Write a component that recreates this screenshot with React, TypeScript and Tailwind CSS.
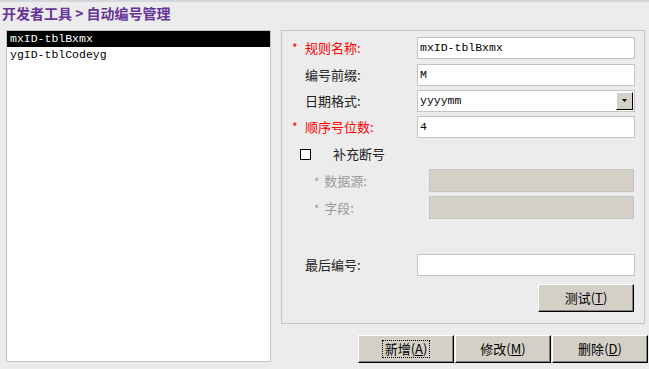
const mono = "font-['Liberation_Mono','Noto_Sans_CJK_SC',monospace]"
const cjk = "font-['Noto_Sans_CJK_SC','Liberation_Sans',sans-serif]"

const rules = ["mxID-tblBxmx", "ygID-tblCodeyg"]

function Btn({ label, hot, focus, className = "" }: { label: string; hot: string; focus?: boolean; className?: string }) {
	return (
		<button
			className={`flex items-center justify-center bg-[#d4d0c8] border border-t-white border-l-white border-b-black border-r-black shadow-[inset_-1px_-1px_0_#808080] text-[13px] text-black ${cjk} ${className}`}
		>
			<span className={`px-[2px] leading-[16px] ${focus ? "outline outline-1 outline-dotted outline-black" : ""}`}>
				{label}(<span className="underline">{hot}</span>)
			</span>
		</button>
	)
}

function Field({ value, disabled }: { value?: string; disabled?: boolean }) {
	return (
		<div
			className={`h-[22px] border border-[#c4c4c4] flex items-center px-[2px] text-[11.5px] text-black ${mono} ${disabled ? "bg-[#d4d0c8] w-[205px] h-[23px]" : "bg-white w-[218px]"}`}
		>
			{value}
		</div>
	)
}

function Label({ text, req, red }: { text: string; req?: boolean; red?: boolean }) {
	return (
		<div className={`w-[135px] flex items-center text-[13px] ${cjk} ${red ? "text-[#ff0000]" : "text-[#222]"}`}>
			<span className="w-[13px] pl-[10px] text-[12px]">{req ? "*" : ""}</span>
			<span className="ml-[10px]">{text}</span>
		</div>
	)
}

export default function App() {
	return (
		<div className="w-[649px] h-[369px] bg-[#ececec] border-t-2 border-[#d3d7dc] overflow-hidden">
			<div className={`h-[28px] pl-[2px] pt-[1px] text-[14px] font-bold text-[#663399] ${cjk}`}>开发者工具 &gt; 自动编号管理</div>
			<div className="flex pl-[6px] gap-[10px]">
				<ul className={`w-[265px] h-[332px] bg-white border border-[#c4c4c4] text-[11.5px] ${mono}`}>
					{rules.map((r, i) => (
						<li key={r} className={`h-[16px] leading-[16px] pl-[3px] ${i === 0 ? "bg-black text-white" : "text-black"}`}>
							{r}
						</li>
					))}
				</ul>
				<div className="flex flex-col">
					<div className="w-[364px] h-[294px] border border-[#c4c4c4] pt-[6px] flex flex-col">
						<div className="flex">
							<Label text="规则名称:" req red />
							<Field value="mxID-tblBxmx" />
						</div>
						<div className="flex mt-[5px]">
							<Label text="编号前缀:" />
							<Field value="M" />
						</div>
						<div className="flex mt-[4px]">
							<Label text="日期格式:" />
							<div className={`w-[218px] h-[22px] bg-white border border-[#c4c4c4] flex items-center justify-between pl-[2px] text-[11.5px] ${mono}`}>
								yyyymm
								<span className="w-[17px] h-[18px] mr-px bg-[#d4d0c8] border border-t-white border-l-white border-b-black border-r-black flex items-center justify-center">
									<svg width="7" height="4" viewBox="0 0 7 4">
										<path d="M1 0h5L3.5 3z" fill="#000" />
									</svg>
								</span>
							</div>
						</div>
						<div className="flex mt-[4px]">
							<Label text="顺序号位数:" req red />
							<Field value="4" />
						</div>
						<div className={`flex items-center mt-[8px] h-[16px] text-[13px] text-[#222] ${cjk}`}>
							<span className="ml-[18px] w-[11px] h-[11px] border border-black bg-white" />
							<span className="ml-[22px]">补充断号</span>
						</div>
						<div className={`flex flex-col gap-[4px] mt-[7px] text-[13px] text-[#999] ${cjk}`}>
							<div className="flex items-center">
								<span className="w-[147px] pl-[32px]">
									<span className="text-[11px] mr-[5px]">*</span>数据源:
								</span>
								<Field disabled />
							</div>
							<div className="flex items-center">
								<span className="w-[147px] pl-[32px]">
									<span className="text-[11px] mr-[5px]">*</span>字段:
								</span>
								<Field disabled />
							</div>
						</div>
						<div className="flex mt-[35px]">
							<Label text="最后编号:" />
							<Field />
						</div>
						<div className="flex justify-end pr-[10px] mt-[8px]">
							<Btn label="测试" hot="T" className="w-[96px] h-[28px]" />
						</div>
					</div>
					<div className="flex justify-end mt-[11px] mr-[-3px] gap-px">
						<Btn label="新增" hot="A" focus className="w-[96px] h-[28px]" />
						<Btn label="修改" hot="M" className="w-[96px] h-[28px]" />
						<Btn label="删除" hot="D" className="w-[96px] h-[28px]" />
					</div>
				</div>
			</div>
		</div>
	)
}
